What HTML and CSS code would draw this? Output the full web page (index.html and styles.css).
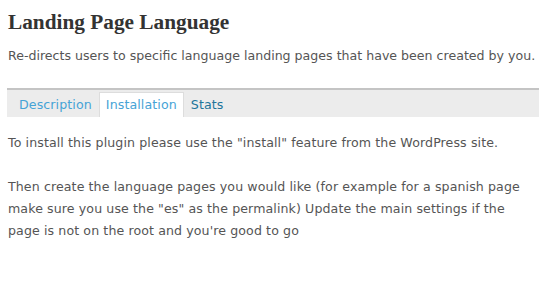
FILE: index.html
```html
<!DOCTYPE html>
<html>
<head lang="en">
    <meta charset="UTF-8">
    <title>Landing Page Language</title>
    <link rel="stylesheet" href="styles.css">
</head>
<body>
<div id="plugin">
    <h2 class="ptitle">Landing Page Language</h2>
    <p class="pdesc">Re-directs users to specific language landing pages that have been created by you.</p>
    <ul class="tabs">
        <li><a href="#">Description</a></li>
        <li class="current"><a href="#">Installation</a></li>
        <li><a href="#" class="dark">Stats</a></li>
    </ul>
    <div class="tabbody">
        <p>To install this plugin please use the "install" feature from the WordPress site.</p>
        <p>Then create the language pages you would like (for example for a spanish page make sure you use the "es" as the permalink) Update the main settings if the page is not on the root and you're good to go</p>
    </div>
</div>
</body>
</html>
```

FILE: styles.css
```css
*{margin:0;padding:0;}
body{background:#fff;font-family:"DejaVu Sans",Verdana,sans-serif;font-size:12.6px;letter-spacing:0.1px;color:#555;}
#plugin{padding:10px 9px 0 7px;}
.ptitle{font-family:"Liberation Serif",Georgia,serif;font-size:21.3px;line-height:24px;color:#333;font-weight:bold;letter-spacing:0;padding-left:1px;}
.pdesc{margin-top:12px;line-height:20px;padding-left:1px;white-space:nowrap;letter-spacing:0;}
.tabs{list-style:none;display:flex;margin-top:22px;padding:2px 0 0 5px;background:#ececec;border-top:2px solid #c4c4c4;height:25px;}
.tabs li{padding:0 6px;line-height:24px;border:1px solid transparent;border-bottom:0;}
.tabs li.current{background:#fff;border-color:#ddd;}
.tabs a{text-decoration:none;color:#46a3d6;}
.tabs a.dark{color:#21759b;}
.tabbody{padding:15px 0 0 1px;}
.tabbody p{line-height:22px;margin-bottom:22px;}
```
